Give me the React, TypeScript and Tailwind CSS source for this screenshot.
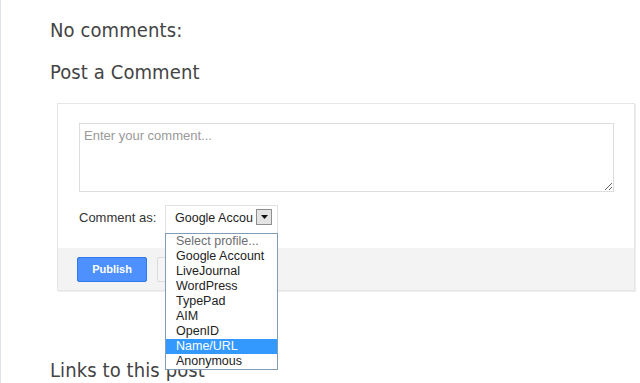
import React from "react";

const heading =
  "font-['DejaVu_Sans_Condensed','DejaVu_Sans',sans-serif] font-stretch-condensed text-[20px] leading-[24px] text-[#444444] font-normal tracking-[0.1px]";

const options = [
  "Select profile...",
  "Google Account",
  "LiveJournal",
  "WordPress",
  "TypePad",
  "AIM",
  "OpenID",
  "Name/URL",
  "Anonymous",
];

export default function App() {
  return (
    <div className="relative w-[640px] h-[383px] overflow-hidden bg-white border-l border-[#dde2e7] font-['Liberation_Sans',Arial,sans-serif]">
      <div className="pl-[49px] pt-[18px]">
        <h4 className={heading}>No comments:</h4>
        <h4 className={`${heading} mt-[18px]`}>Post a Comment</h4>
        <div className="mt-[19px] ml-[7px] w-[578px] border border-[#e6e6e6] shadow-[1px_1px_0_#eeeeee]">
          <div className="bg-white pt-[19px] pl-[21px] pr-[20px] pb-[14px]">
            <textarea
              className="block w-[535px] h-[69px] border border-[#dddddd] px-[4px] pt-[4px] text-[13px] leading-[15px] text-[#333] placeholder:text-[#999999] outline-none resize"
              placeholder="Enter your comment..."
            />
            <div className="mt-[13px] flex items-start">
              <span className="w-[86px] mt-[5px] text-[13px] leading-[15px] text-[#333333]">
                Comment as:
              </span>
              <div className="relative w-[113px] h-[29px] border border-[#e2e2e2] bg-white flex items-start">
                <span className="ml-[9px] mt-[5px] w-[80px] overflow-hidden whitespace-nowrap text-[12.5px] leading-[15px] text-[#222222]">
                  Google Accou
                </span>
                <span className="mt-[3px] ml-[1px] w-[16px] h-[16px] border border-[#8e8e8e] bg-[#e4e4e4] flex items-center justify-center">
                  <svg width="7" height="4" viewBox="0 0 7 4">
                    <path d="M0 0H7L3.5 4Z" fill="#111" />
                  </svg>
                </span>
                <div className="absolute z-10 left-[-1px] top-[27px] w-[113px] border border-[#7f9db9] bg-white">
                  {options.map((o, i) => (
                    <div
                      key={o}
                      className={
                        "h-[15px] pl-[10px] text-[12.5px] leading-[15px] whitespace-nowrap " +
                        (i === 7
                          ? "bg-[#3399ff] text-white"
                          : i === 0
                          ? "text-[#6d6d6d]"
                          : "text-[#222222]")
                      }
                    >
                      {o}
                    </div>
                  ))}
                </div>
              </div>
            </div>
          </div>
          <div className="bg-[#f3f3f3] h-[42px] pt-[9px] pl-[19px] flex items-start gap-[10px]">
            <button className="w-[70px] h-[25px] rounded-[2px] border border-[#3079ed] bg-[#4d90fe] text-white text-[11px] font-bold leading-[23px]">
              Publish
            </button>
            <button
              aria-label="Preview"
              className="w-[70px] h-[25px] rounded-[2px] border border-[#dcdcdc] bg-[#f5f5f5]"
            />
          </div>
        </div>
        <h4 className={`${heading} mt-[67px]`}>Links to this post</h4>
      </div>
    </div>
  );
}
